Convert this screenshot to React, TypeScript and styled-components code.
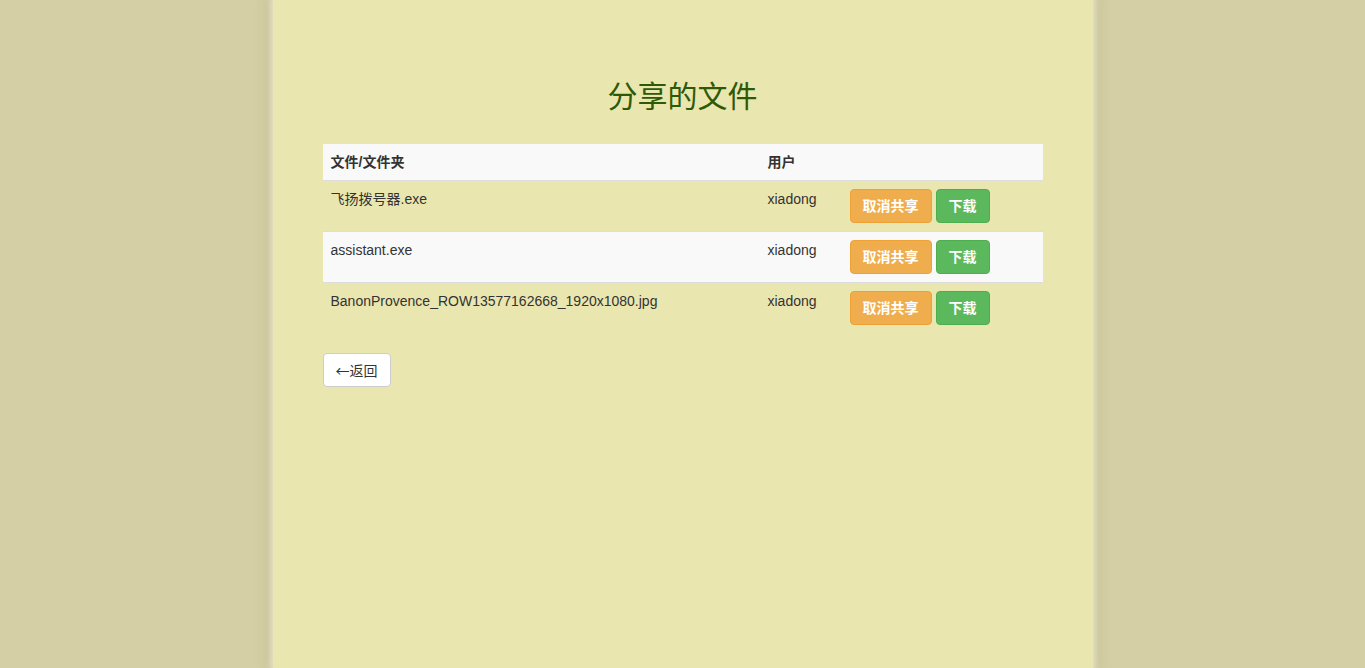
import React from "react";
import styled, { createGlobalStyle } from "styled-components";

const Global = createGlobalStyle`
  html, body { margin: 0; padding: 0; }
  body {
    background: #d4cfa4;
    font-family: "Liberation Sans", Arial, "Noto Sans CJK SC", sans-serif;
    font-size: 14px;
    line-height: 20px;
    color: #333;
  }
`;

const Page = styled.div`
  width: 820px;
  min-height: 100vh;
  margin: 0 auto;
  box-sizing: border-box;
  background: #eae6b0;
  box-shadow: 0 0 6px 3px rgba(235, 232, 205, 0.9), 0 0 12px 4px rgba(120, 115, 80, 0.25);
  padding: 80px 50px 40px;
`;

const Title = styled.h2`
  margin: 0 0 30px;
  text-align: center;
  font-size: 30px;
  line-height: 34px;
  font-weight: 400;
  color: #2f5a05;
  font-family: "Liberation Sans", "Noto Sans CJK SC", sans-serif;
`;

const Table = styled.table`
  width: 720px;
  border-collapse: collapse;
  border-spacing: 0;
  margin-bottom: 20px;
`;

const Th = styled.th<{ $w?: number }>`
  text-align: left;
  padding: 8px;
  font-weight: 700;
  background: #f9f9f9;
  border-bottom: 1px solid #ddd;
  vertical-align: bottom;
  width: ${(p) => (p.$w ? `${p.$w}px` : "auto")};
  box-sizing: border-box;
`;

const Row = styled.tr<{ $striped?: boolean }>`
  background: ${(p) => (p.$striped ? "#f9f9f9" : "transparent")};
`;

const Td = styled.td`
  padding: 8px;
  vertical-align: top;
  border-top: 1px solid #ddd;
  line-height: 20px;
`;

const Actions = styled.div`
  display: flex;
  gap: 4px;
`;

const Btn = styled.button<{ $kind: "warning" | "success" }>`
  height: 34px;
  padding: 6px 12px;
  border-radius: 4px;
  font-family: "Liberation Sans", "Noto Sans CJK SC", sans-serif;
  font-size: 14px;
  font-weight: 700;
  line-height: 20px;
  color: #fff;
  cursor: pointer;
  background: ${(p) => (p.$kind === "warning" ? "#f0ad4e" : "#5cb85c")};
  border: 1px solid ${(p) => (p.$kind === "warning" ? "#eea236" : "#4cae4c")};
`;

const BackBtn = styled.button`
  height: 34px;
  padding: 6px 12px;
  border-radius: 4px;
  background: #fff;
  border: 1px solid #ccc;
  color: #333;
  font-family: "Noto Sans CJK SC", "Liberation Sans", sans-serif;
  font-size: 14px;
  line-height: 20px;
  cursor: pointer;
`;

const files = [
  { name: "飞扬拨号器.exe", user: "xiadong" },
  { name: "assistant.exe", user: "xiadong" },
  { name: "BanonProvence_ROW13577162668_1920x1080.jpg", user: "xiadong" },
];

export default function App() {
  return (
    <>
      <Global />
      <Page>
        <Title>分享的文件</Title>
        <Table>
          <thead>
            <tr>
              <Th $w={437}>文件/文件夹</Th>
              <Th $w={82}>用户</Th>
              <Th></Th>
            </tr>
          </thead>
          <tbody>
            {files.map((f, i) => (
              <Row key={f.name} $striped={i % 2 === 1}>
                <Td>{f.name}</Td>
                <Td>{f.user}</Td>
                <Td>
                  <Actions>
                    <Btn $kind="warning">取消共享</Btn>
                    <Btn $kind="success">下载</Btn>
                  </Actions>
                </Td>
              </Row>
            ))}
          </tbody>
        </Table>
        <BackBtn>←返回</BackBtn>
      </Page>
    </>
  );
}
